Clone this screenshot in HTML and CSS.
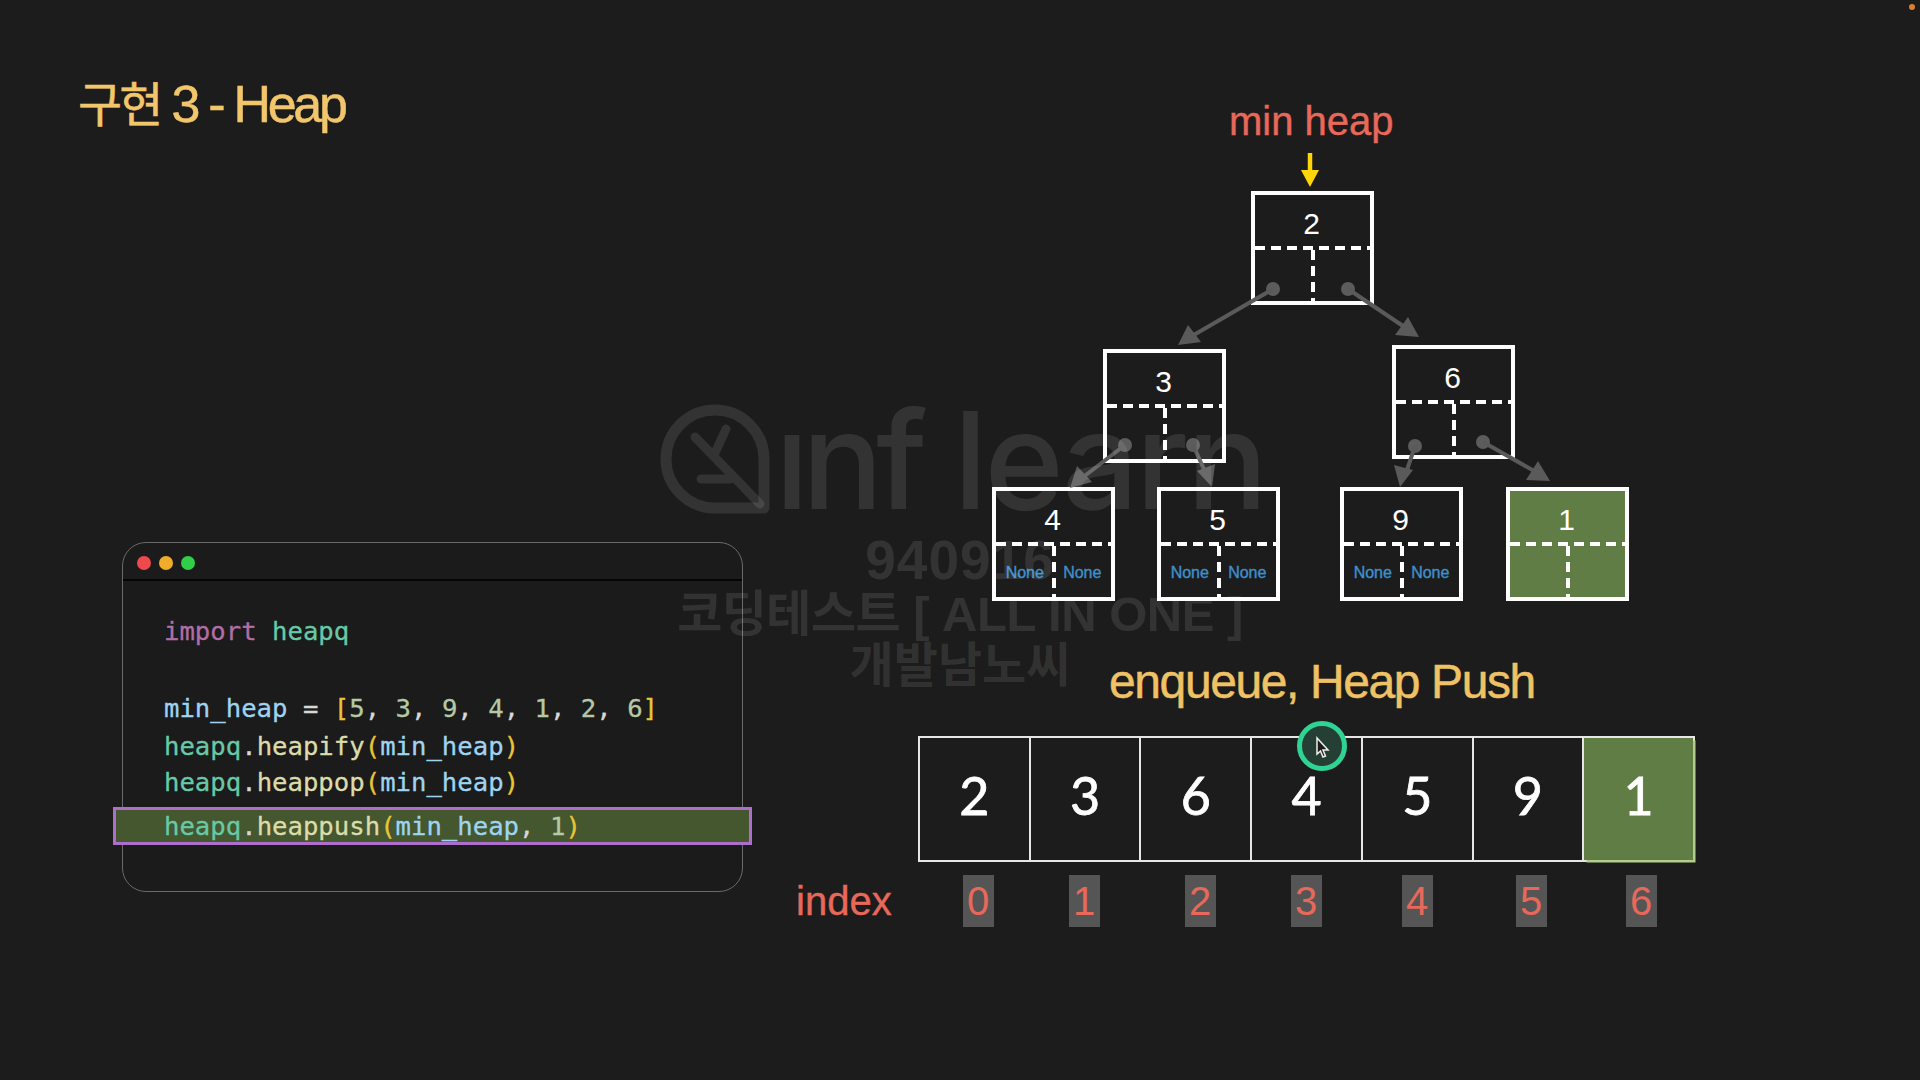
FILE: index.html
```html
<!DOCTYPE html>
<html lang="ko">
<head>
<meta charset="utf-8">
<title>구현 3 - Heap</title>
<link rel="stylesheet" href="styles.css">
</head>
<body>
<main class="slide">
  <section class="left">
    <h1 class="title"><span class="title-ko">구현</span> 3 - Heap</h1>
    <div class="window">
      <div class="titlebar"><i class="dot red"></i><i class="dot amber"></i><i class="dot green"></i></div>
      <div class="code">
        <div class="line"><span class="kw">import</span> <span class="mod">heapq</span></div>
        <div class="line gap"><span class="var">min_heap</span> <span class="pl">=</span> <span class="br">[</span><span class="num">5</span><span class="pl">,</span> <span class="num">3</span><span class="pl">,</span> <span class="num">9</span><span class="pl">,</span> <span class="num">4</span><span class="pl">,</span> <span class="num">1</span><span class="pl">,</span> <span class="num">2</span><span class="pl">,</span> <span class="num">6</span><span class="br">]</span></div>
        <div class="line near"><span class="mod">heapq</span><span class="pl">.</span><span class="fn">heapify</span><span class="br">(</span><span class="var">min_heap</span><span class="br">)</span></div>
        <div class="line"><span class="mod">heapq</span><span class="pl">.</span><span class="fn">heappop</span><span class="br">(</span><span class="var">min_heap</span><span class="br">)</span></div>
        <div class="line active"><span class="mod">heapq</span><span class="pl">.</span><span class="fn">heappush</span><span class="br">(</span><span class="var">min_heap</span><span class="pl">,</span> <span class="num">1</span><span class="br">)</span></div>
      </div>
    </div>
  </section>

  <section class="right">
    <div class="tree">
      <div class="tree-label">min heap</div>
      <div class="node n-root"><div class="val">2</div><div class="kids"><span></span><span></span></div></div>
      <div class="node n-3"><div class="val">3</div><div class="kids"><span></span><span></span></div></div>
      <div class="node n-6"><div class="val">6</div><div class="kids"><span></span><span></span></div></div>
      <div class="node n-4"><div class="val">4</div><div class="kids"><span>None</span><span>None</span></div></div>
      <div class="node n-5"><div class="val">5</div><div class="kids"><span>None</span><span>None</span></div></div>
      <div class="node n-9"><div class="val">9</div><div class="kids"><span>None</span><span>None</span></div></div>
      <div class="node n-1 fresh"><div class="val">1</div><div class="kids"><span></span><span></span></div></div>
      <svg class="links" width="1140" height="650" viewBox="780 0 1140 650" aria-hidden="true">
        <g class="link">
          <circle cx="1273" cy="289" r="7"/><path d="M1273 289L1192 336"/><path class="head" d="M1178 345L1188 325L1201 342Z"/>
          <circle cx="1348" cy="289" r="7"/><path d="M1348 289L1406 328"/><path class="head" d="M1419 337L1395 335L1408 317Z"/>
          <circle cx="1125" cy="445" r="7"/><path d="M1125 445L1082 478"/><path class="head" d="M1070 488L1077 466L1092 482Z"/>
          <circle cx="1193" cy="445" r="7"/><path d="M1193 445L1207 476"/><path class="head" d="M1212 487L1197 471L1215 464Z"/>
          <circle cx="1415" cy="446" r="7"/><path d="M1415 446L1405 476"/><path class="head" d="M1400 487L1394 465L1413 470Z"/>
          <circle cx="1483" cy="442" r="7"/><path d="M1483 442L1536 472"/><path class="head" d="M1550 481L1526 480L1538 461Z"/>
        </g>
        <path class="root-arrow" d="M1310 153V172"/>
        <path class="root-head" d="M1301 170H1319L1310 187Z"/>
      </svg>
    </div>

    <h2 class="heading">enqueue, Heap Push</h2>

    <div class="array">
      <div class="cell"><span>2</span></div>
      <div class="cell"><span>3</span></div>
      <div class="cell"><span>6</span></div>
      <div class="cell"><span>4</span></div>
      <div class="cell"><span>5</span></div>
      <div class="cell"><span>9</span></div>
      <div class="cell fresh"><span>1</span></div>
      <svg class="pointer" width="60" height="60" viewBox="0 0 60 60" aria-hidden="true">
        <circle class="ring" cx="30" cy="30" r="22.500"/>
        <path class="arrow" d="M25 22V38L28.500 35L31 41L33.500 40L31 34H36Z"/>
      </svg>
    </div>

    <div class="indexes">
      <span class="index-label">index</span>
      <span class="badge">0</span>
      <span class="badge">1</span>
      <span class="badge">2</span>
      <span class="badge">3</span>
      <span class="badge">4</span>
      <span class="badge">5</span>
      <span class="badge">6</span>
    </div>
  </section>

  <div class="watermark">
    <div class="wm-logo">
      <svg width="120" height="116" viewBox="653 402 120 116" aria-hidden="true">
        <path class="wm-ring" d="M762 459A49 49 0 1 0 713 508H762Z"/>
        <path class="wm-branch" d="M693 437L758 504M713 453L724 429M728 479H699"/>
      </svg>
      <span class="wm-word"><span class="wm-inf">ınf</span> learn</span>
    </div>
    <div class="wm-id">940916</div>
    <div class="wm-course">코딩테스트 [ ALL IN ONE ]</div>
    <div class="wm-author">개발남노씨</div>
  </div>
  <i class="rec"></i>
</main>
</body>
</html>
```
FILE: styles.css
```css
* { box-sizing: border-box; }
html, body { margin: 0; padding: 0; }
body { background: #1c1c1c; }

.slide {
  position: relative;
  width: 1920px;
  height: 1080px;
  overflow: hidden;
  display: grid;
  grid-template-columns: 780px 1140px;
  background: #1c1c1c;
  font-family: "Liberation Sans", "Noto Sans CJK KR", sans-serif;
}

/* left column */
.left { padding: 74px 0 0 78px; }
.title {
  margin: 0;
  height: 60px;
  font-size: 52px;
  line-height: 60px;
  font-weight: 400;
  letter-spacing: -3.300px;
  -webkit-text-stroke: 0.500px #f2c66b;
  color: #f2c66b;
}
.title-ko { font-size: 48px; letter-spacing: -3px; }
.window {
  width: 621px;
  height: 350px;
  margin: 408px 0 0 44px;
  border: 1.500px solid #6a6a6a;
  border-radius: 24px;
  background: #1b1b1b;
}
.titlebar {
  height: 38px;
  display: flex;
  align-items: center;
  gap: 8px;
  padding: 4px 0 0 14px;
  border-bottom: 2px solid #050505;
}
.dot { width: 14px; height: 14px; border-radius: 50%; }
.dot.red { background: #ee4a4e; }
.dot.amber { background: #f0ad2c; }
.dot.green { background: #2fcf47; }

.code {
  padding: 32px 0 0 41px;
  font-family: "DejaVu Sans Mono", monospace;
  font-size: 25.650px;
  line-height: 36px;
  -webkit-text-stroke: 0.300px;
}
.line { height: 36px; white-space: pre; }
.line.gap { margin-top: 41px; }
.line.near { margin-top: 2px; }
.line.active {
  height: 38px;
  margin: 7px -10px 0 -51px;
  padding-left: 51px;
  line-height: 32px;
  border: 3px solid #ad6fcb;
  background: #45572f;
}
.line.active .mod { margin-left: -3px; }
.kw { color: #b26ea6; }
.mod { color: #67c9a6; }
.var { color: #9ed4f2; }
.pl { color: #d8d8d8; }
.br { color: #e8c536; }
.num { color: #b5c9a4; }
.fn { color: #dcdcaa; }

/* tree */
.tree { position: relative; height: 652px; }
.tree-label {
  position: absolute;
  left: 449px;
  top: 97px;
  font-size: 40px;
  line-height: 48px;
  -webkit-text-stroke: 0.400px #e8685a;
  color: #e8685a;
}
.node {
  position: absolute;
  width: 123px;
  height: 114px;
  display: flex;
  flex-direction: column;
  border: 4.500px solid #fff;
  background: transparent;
  color: #fff;
}
.n-root { left: 471px; top: 191px; }
.n-3 { left: 323px; top: 349px; }
.n-6 { left: 612px; top: 345px; }
.n-4 { left: 212px; top: 487px; }
.n-5 { left: 377px; top: 487px; }
.n-9 { left: 560px; top: 487px; }
.n-1 { left: 726px; top: 487px; }
.node.fresh { background: #5f7d45; }
.val {
  height: 51px;
  flex: none;
  padding-right: 2px;
  text-align: center;
  font-size: 30px;
  line-height: 57px;
}
.kids {
  flex: 1;
  display: grid;
  grid-template-columns: 1fr 1fr;
  align-items: center;
  padding-top: 6px;
  background-image:
    repeating-linear-gradient(90deg, #fff 0 10px, transparent 10px 16px),
    repeating-linear-gradient(180deg, #fff 0 10px, transparent 10px 16px);
  background-size: 100% 4px, 4px 100%;
  background-position: 0 0, center 4px;
  background-repeat: no-repeat;
}
.kids span {
  text-align: center;
  font-size: 16px;
  font-weight: 400;
  -webkit-text-stroke: 0.400px #3f8fcb;
  color: #3f8fcb;
}
.links { position: absolute; left: 0; top: 0; }
.link circle { fill: #5c5c5c; }
.link path { stroke: #5a5a5a; stroke-width: 4; fill: none; }
.link path.head { fill: #5a5a5a; stroke: none; }
.root-arrow { stroke: #ffd60a; stroke-width: 4.500; fill: none; }
.root-head { fill: #ffd60a; }

/* heading + array */
.heading {
  margin: 0 0 24px 329px;
  height: 60px;
  font-size: 48px;
  line-height: 60px;
  font-weight: 400;
  letter-spacing: -1.400px;
  -webkit-text-stroke: 0.500px #eec265;
  color: #eec265;
}
.array {
  position: relative;
  width: 777px;
  height: 126px;
  margin-left: 138px;
  display: flex;
  border: 2.500px solid #e6e6e6;
}
.cell {
  flex: 1;
  display: flex;
  align-items: center;
  justify-content: center;
  padding-bottom: 8px;
  border-right: 2.500px solid #e6e6e6;
  color: #fff;
  font-family: "Lato", sans-serif;
  font-size: 52px;
  font-weight: 400;
  -webkit-text-stroke: 0.800px #fff;
}
.cell:last-of-type { border-right: 0; }
.cell.fresh { background: #5f7d45; box-shadow: 2.500px 2.500px 0 #b2cc8c; }
.pointer { position: absolute; left: 372px; top: -22px; }
.ring { fill: #263f34; stroke: #2fd394; stroke-width: 5; }
.arrow { fill: #1c1c1c; stroke: #eee; stroke-width: 1.500; }

/* index row */
.indexes {
  display: flex;
  align-items: center;
  margin: 13px 0 0 16px;
  color: #e8685a;
}
.index-label { font-size: 40px; line-height: 52px; margin-right: 71px; -webkit-text-stroke: 0.400px #e8685a; }
.badge {
  width: 31px;
  height: 52px;
  display: flex;
  align-items: center;
  justify-content: center;
  background: #555;
  font-size: 40px;
}
.badge:nth-of-type(3) { margin-left: 75px; }
.badge:nth-of-type(4) { margin-left: 85px; }
.badge:nth-of-type(5) { margin-left: 75px; }
.badge:nth-of-type(6) { margin-left: 80px; }
.badge:nth-of-type(7) { margin-left: 83px; }
.badge:nth-of-type(8) { margin-left: 79px; }

/* watermark over everything */
.watermark {
  position: absolute;
  left: 655px;
  top: 402px;
  width: 610px;
  display: flex;
  flex-direction: column;
  align-items: center;
  color: rgba(255, 255, 255, 0.1);
  font-weight: 700;
  pointer-events: none;
}
.wm-logo { display: flex; align-items: flex-start; width: 100%; height: 116px; }
.wm-logo svg { flex: none; }
.wm-ring { fill: none; stroke: rgba(255, 255, 255, 0.1); stroke-width: 11; stroke-linejoin: round; }
.wm-branch { fill: none; stroke: rgba(255, 255, 255, 0.1); stroke-width: 9; stroke-linecap: round; }
.wm-word {
  font-family: "Inter", sans-serif;
  font-size: 135px;
  font-weight: 500;
  line-height: 116px;
  letter-spacing: -3px;
  white-space: pre;
}
.wm-inf { letter-spacing: -7px; }
.wm-id { font-size: 55px; line-height: 56px; margin-top: 14px; letter-spacing: 1px; }
.wm-course { font-size: 49px; line-height: 52px; letter-spacing: -0.500px; white-space: pre; }
.wm-author { font-size: 48px; line-height: 52px; }

.rec {
  position: absolute;
  right: 5px;
  top: 4px;
  width: 6px;
  height: 6px;
  border-radius: 50%;
  background: #d9822b;
}
```
